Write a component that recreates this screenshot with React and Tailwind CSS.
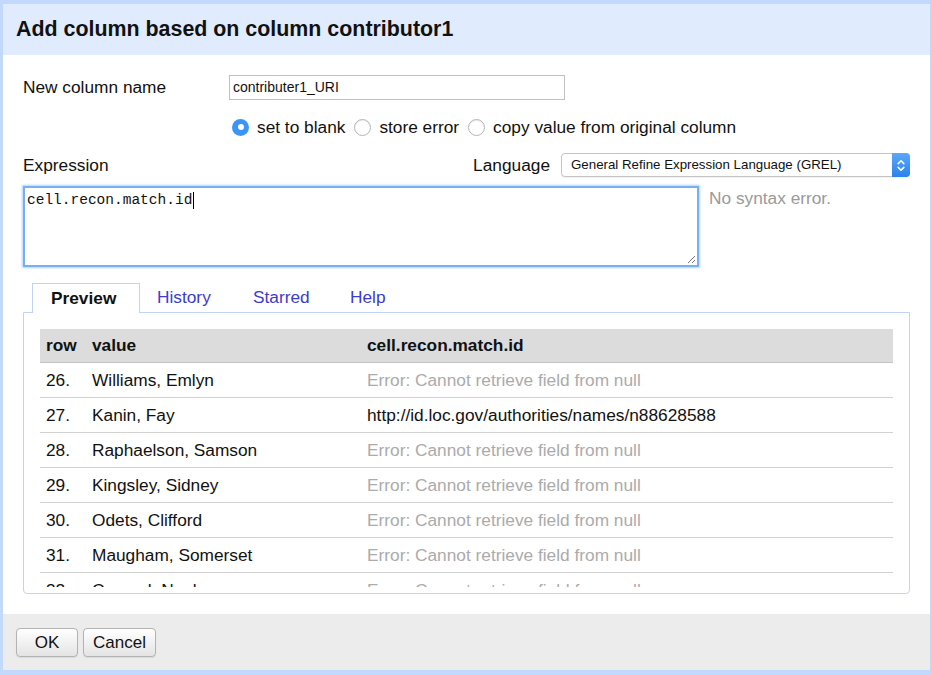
import React from "react";

const rows = [
  ["26.", "Williams, Emlyn", null],
  ["27.", "Kanin, Fay", "http://id.loc.gov/authorities/names/n88628588"],
  ["28.", "Raphaelson, Samson", null],
  ["29.", "Kingsley, Sidney", null],
  ["30.", "Odets, Clifford", null],
  ["31.", "Maugham, Somerset", null],
  ["32.", "Coward, Noel", null],
];

function Radio({ checked, label }) {
  return (
    <label className="flex items-center">
      {checked ? (
        <span className="flex h-[17px] w-[17px] items-center justify-center rounded-full bg-[#3a95f7]">
          <span className="h-[6px] w-[6px] rounded-full bg-white" />
        </span>
      ) : (
        <span className="h-[17px] w-[17px] rounded-full border border-[#b4b4b4] bg-white shadow-[inset_0_1px_1px_rgba(0,0,0,0.08)]" />
      )}
      <span className="ml-[8px] mr-[9px]">{label}</span>
    </label>
  );
}

function Button({ children, width }) {
  return (
    <button
      className={`${width} h-[29px] rounded-[4px] border border-[#b3b3b3] bg-gradient-to-b from-white to-[#e4e4e4] text-[17px] text-[#111] shadow-[0_1px_1px_rgba(0,0,0,0.08)]`}
    >
      {children}
    </button>
  );
}

export default function App() {
  return (
    <div
      className="h-[675px] w-[931px] bg-[#c3d9fb] pt-[4px] pl-[3px] pr-[1px] pb-[5px] text-[17.3px] leading-[1.4] text-[#111]"
      style={{ fontFamily: '"Liberation Sans", Arial, sans-serif' }}
    >
      <div className="flex h-full flex-col">
        {/* title */}
        <div className="flex h-[51px] items-center bg-[#e0ebfd] pl-[13px]">
          <h1 className="text-[21.4px] font-bold text-[#111]">
            Add column based on column contributor1
          </h1>
        </div>

        {/* body */}
        <div className="flex-1 bg-white pl-[20px] pr-[20px]">
          <div className="mt-[20px] flex h-[25px] items-center">
            <div className="w-[206px]">New column name</div>
            <div className="flex h-[25px] w-[336px] items-center border border-[#c0c0c0] pl-[3px] text-[14px]">
              contributer1_URI
            </div>
          </div>

          <div className="ml-[209px] mt-[18px] flex h-[18px] items-center">
            <Radio checked label="set to blank" />
            <Radio label="store error" />
            <Radio label="copy value from original column" />
          </div>

          <div className="mt-[17px] flex h-[24px] items-center">
            <div>Expression</div>
            <div className="flex-1" />
            <div className="mr-[11px]">Language</div>
            <div className="flex h-[24px] w-[349px] items-stretch rounded-[4px] border border-[#c4c4c4] bg-white shadow-[0_1px_1px_rgba(0,0,0,0.06)]">
              <div className="flex flex-1 items-center pl-[9px] text-[13.3px]">
                General Refine Expression Language (GREL)
              </div>
              <div className="-my-px -mr-px flex w-[18px] items-center justify-center rounded-r-[4px] bg-gradient-to-b from-[#5ba8f8] to-[#2a82ec]">
                <svg width="8" height="13" viewBox="0 0 8 13" fill="none" stroke="white" strokeWidth="1.6" strokeLinecap="round" strokeLinejoin="round">
                  <path d="M1.2 4.6 L4 1.8 L6.8 4.6" />
                  <path d="M1.2 8.4 L4 11.2 L6.8 8.4" />
                </svg>
              </div>
            </div>
          </div>

          <div className="mt-[9px] flex items-start">
            <div className="relative h-[81px] w-[676px] border-2 border-[#78aef2] bg-white px-[2px] pt-[2px] shadow-[0_0_2px_1px_#b3d3fa]">
              <div className="flex items-center text-[14.5px] leading-[20px] text-[#111]" style={{ fontFamily: '"Liberation Mono", "Courier New", monospace' }}>
                cell.recon.match.id
                <span className="ml-[1px] inline-block h-[17px] w-[1px] bg-black" />
              </div>
              <svg className="absolute bottom-[1px] right-[1px]" width="10" height="10" viewBox="0 0 10 10" stroke="#777" strokeWidth="1">
                <path d="M9 2 L2 9" />
                <path d="M9 6 L6 9" />
              </svg>
            </div>
            <div className="ml-[10px] text-[#9a9a9a]">No syntax error.</div>
          </div>

          {/* tabs */}
          <div className="mt-[16px]">
            <div className="flex items-end pl-[9px]">
              <div className="relative z-10 -mb-px flex h-[30px] w-[108px] items-center border border-b-0 border-[#c2d3fa] bg-white pl-[18px] font-bold">
                Preview
              </div>
              <div className="flex h-[29px] w-[96px] items-center pl-[17px] text-[#3c3cd0]">History</div>
              <div className="flex h-[29px] w-[97px] items-center pl-[17px] text-[#3c3cd0]">Starred</div>
              <div className="flex h-[29px] w-[80px] items-center pl-[17px] text-[#3c3cd0]">Help</div>
            </div>
            <div className="rounded-b-[4px] border border-[#c2d3fa] px-[16px] pt-[16px] pb-[6px]">
              <div className="h-[258px] overflow-hidden">
                <div className="flex h-[34px] items-center border-b border-[#c4c4c4] bg-[#dcdcdc] font-bold">
                  <div className="w-[46px] pl-[6px]">row</div>
                  <div className="w-[275px] pl-[6px]">value</div>
                  <div className="pl-[6px]">cell.recon.match.id</div>
                </div>
                {rows.map(([n, name, val]) => (
                  <div key={n} className="flex h-[35px] shrink-0 items-center border-b border-[#d2d2d2]">
                    <div className="w-[46px] pl-[6px]">{n}</div>
                    <div className="w-[275px] pl-[6px]">{name}</div>
                    <div className={val ? "pl-[6px]" : "pl-[6px] text-[#ababab]"}>
                      {val || "Error: Cannot retrieve field from null"}
                    </div>
                  </div>
                ))}
              </div>
            </div>
          </div>
        </div>

        {/* footer */}
        <div className="flex h-[56px] items-start gap-[5px] bg-[#ececec] pl-[13px] pt-[14px]">
          <Button width="w-[62px]">OK</Button>
          <Button width="w-[73px]">Cancel</Button>
        </div>
      </div>
    </div>
  );
}
